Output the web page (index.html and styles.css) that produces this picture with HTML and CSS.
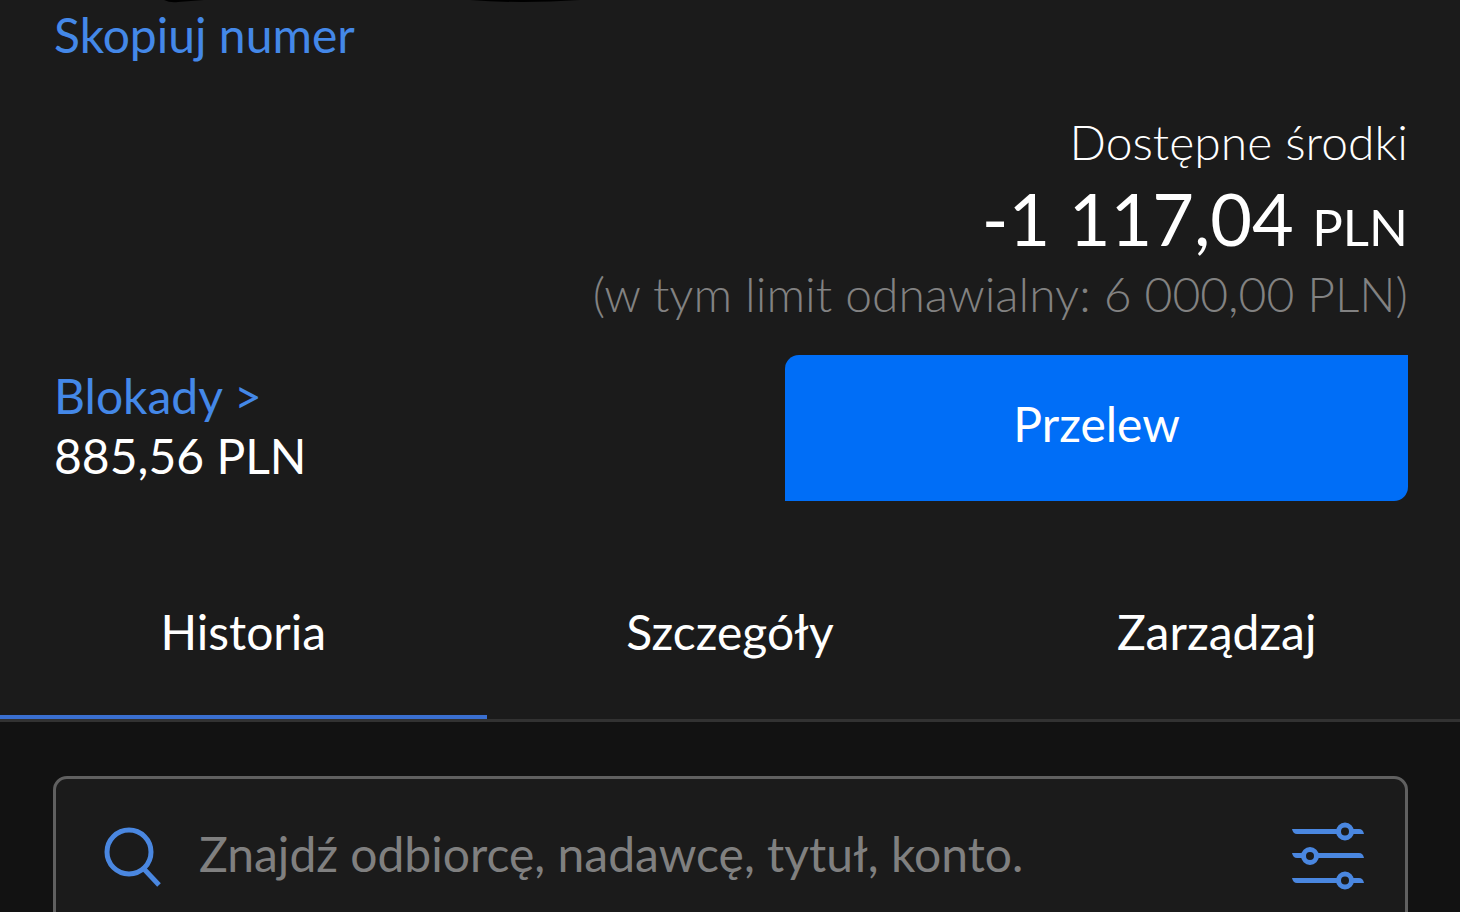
FILE: index.html
```
<!DOCTYPE html>
<html lang="pl">
<head>
    <meta charset="UTF-8">
    <meta name="viewport" content="width=device-width, initial-scale=1.0">
    <title>Konto</title>
    <link rel="stylesheet" href="styles.css">
</head>
<body>
    <svg class="marks" width="600" height="4" viewBox="0 0 600 4" aria-hidden="true">
        <path d="M164 0 Q170 3 178 2 L204 0 Z M470 0 Q520 4 580 0 Z" fill="#000"/>
    </svg>

    <main class="account">
        <a class="link" href="#">Skopiuj numer</a>

        <div class="balance">
            <p class="label">Dostępne środki</p>
            <p class="amount">-1 117,04 <span class="currency">PLN</span></p>
            <p class="limit">(w tym limit odnawialny: 6 000,00 PLN)</p>
        </div>

        <div class="actions">
            <div class="holds">
                <a class="link" href="#">Blokady &gt;</a>
                <p>885,56 PLN</p>
            </div>
            <button class="transfer" type="button">Przelew</button>
        </div>
    </main>

    <nav class="tabs">
        <a class="tab active" href="#">Historia</a>
        <a class="tab" href="#">Szczegóły</a>
        <a class="tab" href="#">Zarządzaj</a>
    </nav>

    <section class="history">
        <form class="search">
            <svg class="icon-search" viewBox="0 0 60 62" aria-hidden="true">
                <circle cx="26" cy="27" r="22"/>
                <path d="M41 44 L56 60"/>
            </svg>
            <input type="text" placeholder="Znajdź odbiorcę, nadawcę, tytuł, konto." aria-label="Szukaj w historii">
            <button class="filter" type="button" aria-label="Filtry">
                <svg class="icon-filter" viewBox="0 0 72 68" aria-hidden="true">
                    <path class="bar" d="M0 7h45v5H5Q1 12 0 7z M61 7h6q4 0 5 5H61z"/>
                    <path class="bar" d="M0 31h11v5H5Q1 36 0 31z M25 31h42q4 0 5 5H25z"/>
                    <path class="bar" d="M0 56h45v5H5Q1 61 0 56z M61 56h6q4 0 5 5H61z"/>
                    <circle cx="53" cy="9.500" r="6.500"/>
                    <circle cx="18" cy="34" r="6.500"/>
                    <circle cx="53" cy="58.500" r="6.500"/>
                </svg>
            </button>
        </form>
    </section>
</body>
</html>
```

FILE: styles.css
```
* {
    box-sizing: border-box;
}

body {
    display: flex;
    flex-direction: column;
    height: 100vh;
    margin: 0;
    background-color: #121212;
    color: #fff;
    font-family: Lato, "Open Sans", sans-serif;
    font-size: 48px;
    line-height: 60px;
}

p {
    margin: 0;
}

a {
    text-decoration: none;
}

.marks {
    position: absolute;
    top: 0;
    left: 0;
}

.account {
    padding: 5px 52px 54px 54px;
    background-color: #1b1b1b;
}

.link {
    display: block;
    color: #4488e8;
}

.balance {
    margin-top: 47px;
    text-align: right;
}

.label,
.limit {
    font-weight: 300;
}

.amount {
    font-size: 72px;
    line-height: 92px;
}

.currency {
    font-size: 51px;
    line-height: 60px;
}

.limit {
    color: #828282;
}

.actions {
    display: flex;
    justify-content: space-between;
    margin-top: 31px;
}

.holds {
    padding-top: 11px;
}

.transfer {
    width: 46%;
    height: 146px;
    padding: 0 0 8px;
    border: none;
    border-radius: 14px 0;
    background-color: #006ef7;
    color: #fff;
    font: inherit;
    cursor: pointer;
}

.tabs {
    display: flex;
    background-color: #1b1b1b;
    border-bottom: 3px solid #323232;
}

.tab {
    flex: 1;
    padding: 47px 0 53px;
    border-bottom: 4px solid transparent;
    color: #fff;
    text-align: center;
}

.tab.active {
    border-color: #3a6fd0;
}

.history {
    flex: 1;
    min-height: 0;
    padding: 54px 52px 0 53px;
    overflow: hidden;
}

.search {
    display: flex;
    align-items: center;
    height: 160px;
    padding: 0 41px 0 47px;
    border: 3px solid #606060;
    border-radius: 14px;
    background-color: #1b1b1b;
}

.search input {
    flex: 1;
    min-width: 0;
    height: 100%;
    margin-left: 36px;
    padding: 0 0 5px;
    border: none;
    outline: none;
    background: none;
    color: #fff;
    font: inherit;
}

.search input::placeholder {
    color: #808080;
    opacity: 1;
}

.filter {
    display: flex;
    padding: 0;
    border: none;
    background: none;
    cursor: pointer;
}

.icon-search,
.icon-filter {
    fill: none;
    stroke: #4a87e0;
    stroke-width: 5;
}

.icon-search {
    width: 60px;
    height: 62px;
}

.icon-filter {
    width: 72px;
    height: 68px;
}

.icon-filter .bar {
    fill: #4a87e0;
    stroke: none;
}
```
